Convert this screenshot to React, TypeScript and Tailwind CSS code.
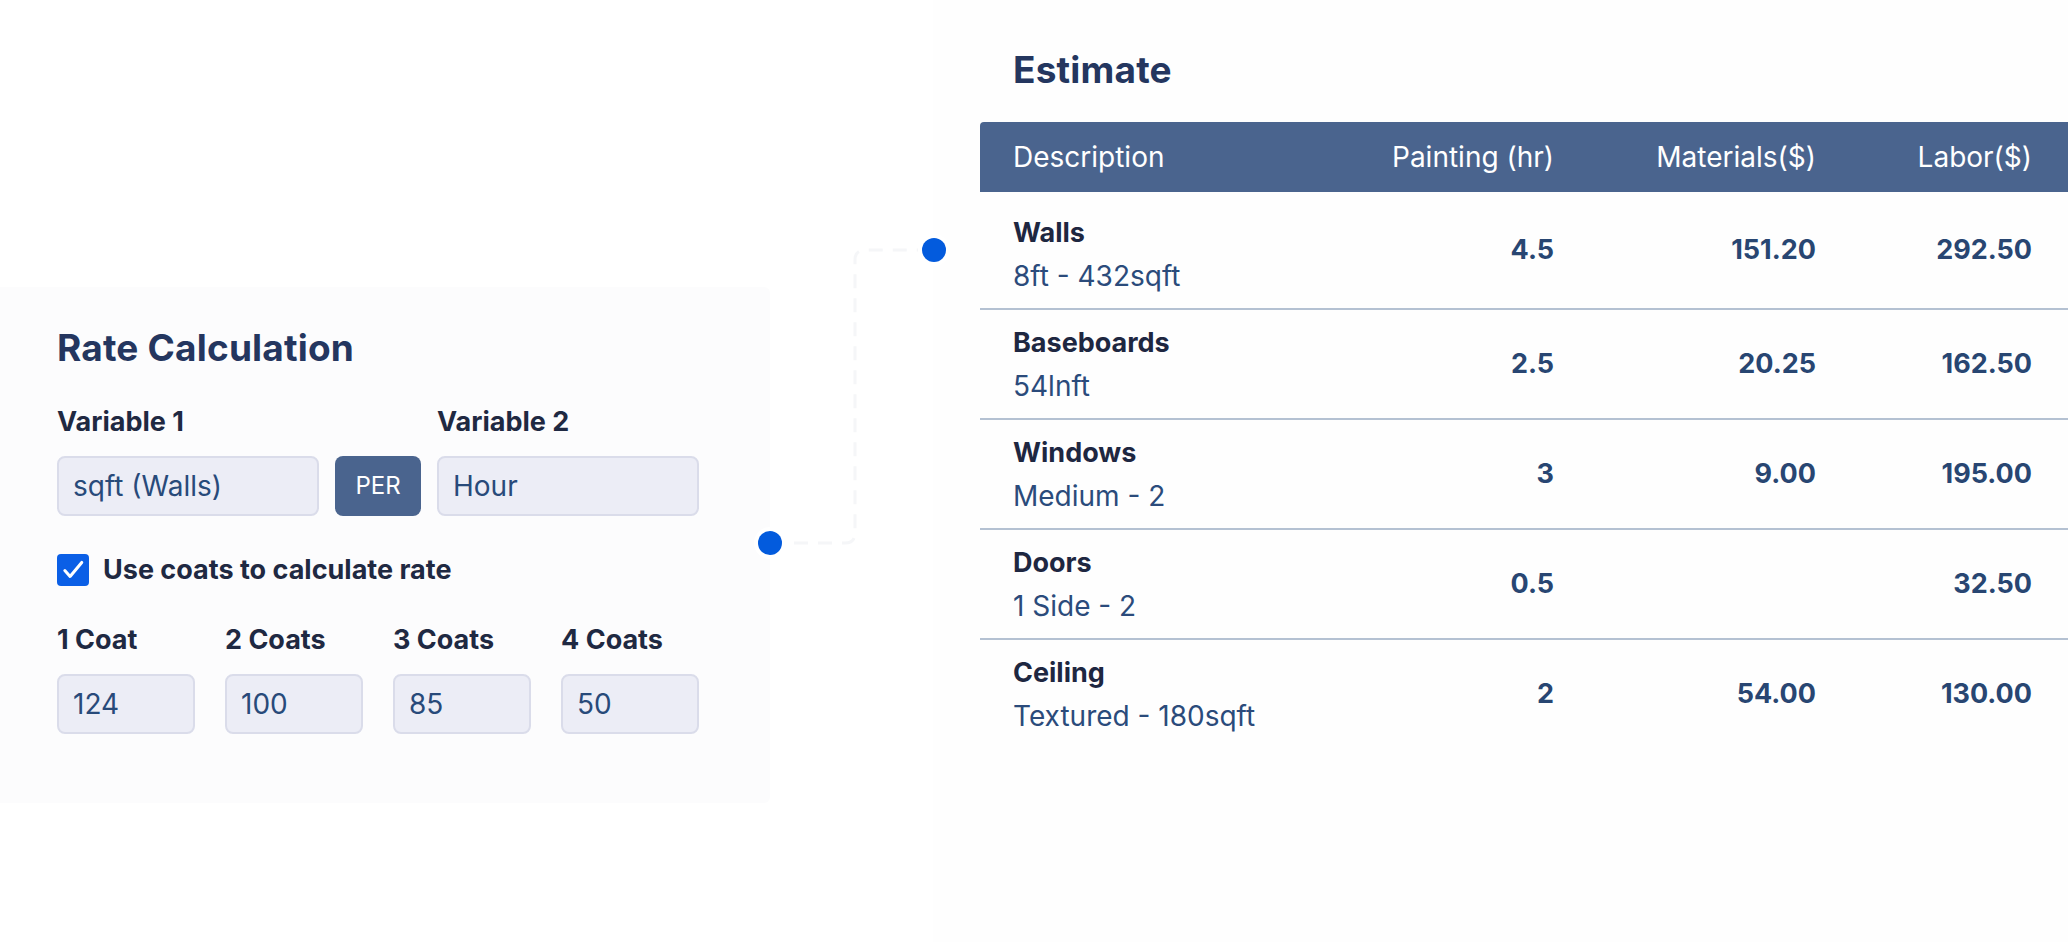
const rows = [
  { name: 'Walls', sub: '8ft - 432sqft', hr: '4.5', mat: '151.20', lab: '292.50' },
  { name: 'Baseboards', sub: '54lnft', hr: '2.5', mat: '20.25', lab: '162.50' },
  { name: 'Windows', sub: 'Medium - 2', hr: '3', mat: '9.00', lab: '195.00' },
  { name: 'Doors', sub: '1 Side - 2', hr: '0.5', mat: '', lab: '32.50' },
  { name: 'Ceiling', sub: 'Textured - 180sqft', hr: '2', mat: '54.00', lab: '130.00' },
];

const coats = [
  { label: '1 Coat', value: '124' },
  { label: '2 Coats', value: '100' },
  { label: '3 Coats', value: '85' },
  { label: '4 Coats', value: '50' },
];

function Field({ value }: { value: string }) {
  return (
    <div className="flex h-[60px] items-center rounded-[8px] border-2 border-[#dadcea] bg-[#ecedf6] pl-[14px] text-[28px] leading-none text-[#284a7a]">
      {value}
    </div>
  );
}

export default function App() {
  return (
    <div className="relative flex h-[942px] w-full items-start overflow-hidden bg-white font-[Inter,sans-serif]">
      {/* Rate calculation card */}
      <section className="mt-[287px] w-[770px] shrink-0 rounded-r-[6px] bg-[#fcfcfd] pt-[39px] pb-[69px] pl-[57px]">
        <h2 className="text-[37px] leading-[44px] font-bold tracking-[0.005em] text-[#24365f]">Rate Calculation</h2>

        <div className="mt-[36px] grid w-[642px] grid-cols-[262px_86px_262px] gap-x-[16px] gap-y-[18px]">
          <div className="text-[27px] leading-[32px] font-bold text-[#1f2942]">Variable 1</div>
          <div />
          <div className="text-[27px] leading-[32px] font-bold text-[#1f2942]">Variable 2</div>
          <Field value="sqft (Walls)" />
          <div className="flex h-[60px] items-center justify-center rounded-[8px] bg-[#4a648e] text-[24px] text-white">PER</div>
          <Field value="Hour" />
        </div>

        <label className="mt-[38px] flex items-center gap-[14px]">
          <span className="flex h-[32px] w-[32px] items-center justify-center rounded-[4px] bg-[#0b5fe6]">
            <svg viewBox="0 0 24 24" className="h-[28px] w-[28px]" fill="none" stroke="white" strokeWidth="2.6" strokeLinecap="round" strokeLinejoin="round">
              <path d="M5 12.5l4.5 5L19.5 5.5" />
            </svg>
          </span>
          <span className="text-[27px] leading-[32px] font-bold text-[#1f2942]">Use coats to calculate rate</span>
        </label>

        <div className="mt-[38px] grid w-[642px] grid-cols-4 gap-x-[30px] gap-y-[18px]">
          {coats.map(c => (
            <div key={c.label} className="text-[27px] leading-[32px] font-bold text-[#1f2942]">{c.label}</div>
          ))}
          {coats.map(c => (
            <Field key={c.value} value={c.value} />
          ))}
        </div>
      </section>

      {/* Estimate card */}
      <section className="ml-[163px] min-w-0 flex-1 self-stretch bg-[#fefefe] pt-[48px] pl-[47px]">
        <h2 className="ml-[33px] text-[37px] leading-[44px] font-bold tracking-[0.005em] text-[#24365f]">Estimate</h2>

        <div className="mt-[30px]">
          <div className="grid h-[70px] grid-cols-[1fr_200px_262px_216px] items-center rounded-tl-[4px] bg-[#4a648e] pr-[36px] pl-[33px] text-[28px] text-white">
            <div>Description</div>
            <div className="text-right">Painting (hr)</div>
            <div className="text-right">Materials($)</div>
            <div className="text-right">Labor($)</div>
          </div>

          {rows.map((r, i) => (
            <div
              key={r.name}
              className={`grid grid-cols-[1fr_200px_262px_216px] pr-[36px] pl-[33px] ${i < rows.length - 1 ? 'border-b-2 border-[#b4c1d2]' : ''}`}
            >
              <div className={`${i === 0 ? 'pt-[24px]' : 'pt-[16px]'} pb-[15px]`}>
                <div className="text-[27px] leading-[34px] font-bold text-[#1e2741]">{r.name}</div>
                <div className="mt-[9px] text-[28px] leading-[34px] text-[#2b4b7b]">{r.sub}</div>
              </div>
              <div className="flex items-center justify-end text-[27px] font-bold text-[#284672]">{r.hr}</div>
              <div className="flex items-center justify-end text-[27px] font-bold text-[#284672]">{r.mat}</div>
              <div className="flex items-center justify-end text-[27px] font-bold text-[#284672]">{r.lab}</div>
            </div>
          ))}
        </div>
      </section>

      {/* connector between the cards */}
      <svg className="pointer-events-none absolute inset-0 h-full w-full" viewBox="0 0 2068 942" fill="none">
        <path d="M770 543 H845 Q855 543 855 533 V260 Q855 250 865 250 H934" stroke="#f5f6f8" strokeWidth="3" strokeDasharray="14 10" />
        <circle cx="934" cy="250" r="16" fill="white" />
        <circle cx="934" cy="250" r="12" fill="#035bdd" />
        <circle cx="770" cy="543" r="16" fill="white" />
        <circle cx="770" cy="543" r="12" fill="#035bdd" />
      </svg>
    </div>
  );
}
